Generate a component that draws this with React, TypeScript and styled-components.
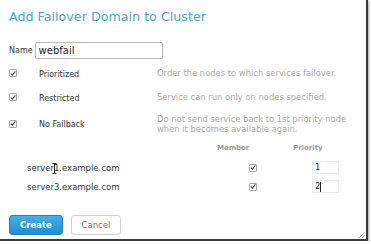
import React from "react";
import styled, { createGlobalStyle } from "styled-components";

const Global = createGlobalStyle`
  html, body { margin: 0; padding: 0; background: #ffffff; }
  body { font-family: "DejaVu Sans", "Liberation Sans", sans-serif; }
  * { box-sizing: border-box; }
`;

const Window = styled.div`
  position: relative;
  width: 368px;
  height: 241px;
  background: #fff;
  border-right: 2px solid #3a3a3a;
  border-bottom: 2px solid #3a3a3a;
  box-shadow: 1px 1px 2px rgba(0,0,0,0.35);
  padding: 8px 9px 0 9px;
  display: flex;
  flex-direction: column;
`;

const Title = styled.h1`
  margin: 0;
  font-weight: normal;
  font-size: 12.7px;
  line-height: 18px;
  color: #4fa3c9;
`;

const NameRow = styled.div`
  display: flex;
  align-items: center;
  margin-top: 16px;
  gap: 2px;
`;

const Label = styled.span`
  font-size: 8px;
  color: #333;
`;

const NameInput = styled.div`
  width: 128px;
  height: 17px;
  border: 1px solid #b8b8b8;
  border-radius: 2px;
  font-size: 10px;
  color: #222;
  padding: 1px 3px;
  line-height: 14px;
`;

const Options = styled.div`
  display: flex;
  flex-direction: column;
  margin-top: 2px;
`;

const OptionRow = styled.div<{ $h: number }>`
  display: grid;
  grid-template-columns: 30px 118px 1fr;
  align-items: center;
  height: ${(p) => p.$h}px;
`;

const OptLabel = styled.span`
  font-size: 8px;
  color: #333;
  padding-top: 2px;
`;

const Desc = styled.span`
  font-size: 8.4px;
  color: #aaaaaa;
  line-height: 10px;
`;

const Box = styled.span`
  display: inline-flex;
  align-items: center;
  justify-content: center;
  width: 8px;
  height: 8px;
  border: 1px solid #a8a8a8;
  border-radius: 1px;
  background: #fff;
`;

const Check = () => (
  <Box>
    <svg width="7" height="7" viewBox="0 0 7 7">
      <path d="M1 3.6 L2.8 5.5 L6.2 1" fill="none" stroke="#333" strokeWidth="1.2" />
    </svg>
  </Box>
);

const Table = styled.div`
  display: grid;
  grid-template-columns: 190px 76px 1fr;
  margin-top: 4px;
  padding-left: 18px;
`;

const Th = styled.div`
  font-size: 7px;
  color: #999;
  font-weight: bold;
  height: 16px;
  line-height: 12px;
`;

const Cell = styled.div<{ $pad?: number }>`
  position: relative;
  height: 19px;
  display: flex;
  align-items: center;
  padding-left: ${(p) => p.$pad ?? 0}px;
  font-size: 8.5px;
  color: #333;
`;

const PrioInput = styled.div`
  width: 27px;
  height: 13px;
  border: 1px solid #ececec;
  font-size: 8.5px;
  color: #333;
  padding-left: 2px;
  line-height: 11px;
`;

const Caret = styled.span`
  display: inline-block;
  width: 1px;
  height: 10px;
  background: #222;
  vertical-align: middle;
`;

const IBeam = styled.svg`
  position: absolute;
  left: 25px;
  top: 5px;
`;

const Buttons = styled.div`
  display: flex;
  gap: 8px;
  margin-top: 19px;
`;

const Button = styled.button<{ $primary?: boolean }>`
  height: 20px;
  width: ${(p) => (p.$primary ? 54 : 50)}px;
  border-radius: 3px;
  font-family: "DejaVu Sans", sans-serif;
  font-size: 8.5px;
  font-weight: ${(p) => (p.$primary ? "bold" : "normal")};
  color: ${(p) => (p.$primary ? "#fff" : "#777")};
  background: ${(p) =>
    p.$primary ? "linear-gradient(#48aee6, #1f8dd2)" : "#fff"};
  border: 1px solid ${(p) => (p.$primary ? "#1e85c6" : "#d2d2d2")};
  padding: 0;
`;

const Grip = styled.svg`
  position: absolute;
  right: 1px;
  bottom: 1px;
`;

export default function App() {
  return (
    <>
      <Global />
      <Window>
        <Title>Add Failover Domain to Cluster</Title>
        <NameRow>
          <Label>Name</Label>
          <NameInput>webfail</NameInput>
        </NameRow>
        <Options>
          <OptionRow $h={24}>
            <Check />
            <OptLabel>Prioritized</OptLabel>
            <Desc>Order the nodes to which services failover.</Desc>
          </OptionRow>
          <OptionRow $h={24}>
            <Check />
            <OptLabel>Restricted</OptLabel>
            <Desc>Service can run only on nodes specified.</Desc>
          </OptionRow>
          <OptionRow $h={29}>
            <Check />
            <OptLabel>No Failback</OptLabel>
            <Desc>
              Do not send service back to 1st priority node
              <br />
              when it becomes available again.
            </Desc>
          </OptionRow>
        </Options>
        <Table>
          <Th />
          <Th>Member</Th>
          <Th>Priority</Th>
          <Cell>
            server1.example.com
            <IBeam width="5" height="11" viewBox="0 0 5 11">
              <path d="M0.5 0.5 H4.5 M2.5 0.5 V10.5 M0.5 10.5 H4.5" stroke="#222" strokeWidth="1" fill="none" />
            </IBeam>
          </Cell>
          <Cell $pad={32}>
            <Check />
          </Cell>
          <Cell $pad={19}>
            <PrioInput>1</PrioInput>
          </Cell>
          <Cell>server3.example.com</Cell>
          <Cell $pad={32}>
            <Check />
          </Cell>
          <Cell $pad={19}>
            <PrioInput>
              2<Caret />
            </PrioInput>
          </Cell>
        </Table>
        <Buttons>
          <Button $primary>Create</Button>
          <Button>Cancel</Button>
        </Buttons>
        <Grip width="6" height="6" viewBox="0 0 6 6">
          <path d="M6 0 L0 6 M6 3 L3 6" stroke="#999" strokeWidth="0.8" />
        </Grip>
      </Window>
    </>
  );
}
